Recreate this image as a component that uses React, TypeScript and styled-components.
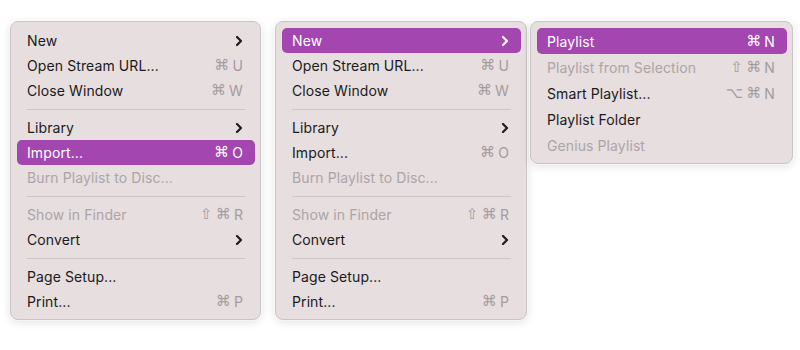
import styled, { createGlobalStyle } from 'styled-components';

const GlobalStyle = createGlobalStyle`
  html, body {
    margin: 0;
    padding: 0;
    background: #ffffff;
  }
  body {
    font-family: Inter, "Liberation Sans", "DejaVu Sans", sans-serif;
    -webkit-font-smoothing: antialiased;
  }
`;

const Page = styled.div`
  width: 800px;
  height: 350px;
  box-sizing: border-box;
  padding: 21px 0 0 10px;
  display: flex;
  align-items: flex-start;
  gap: 14px;
`;

const Cascade = styled.div`
  display: flex;
  align-items: flex-start;
  gap: 3px;
`;

const Menu = styled.div<{ $width: number }>`
  width: ${p => p.$width}px;
  box-sizing: border-box;
  padding: 6px 5px 5px 6px;
  background: #e6dedf;
  border: 1px solid #c9c4c5;
  border-radius: 8px;
  box-shadow: 0 0 0 1px rgba(255, 255, 255, 0.55), 0 2px 10px rgba(0, 0, 0, 0.13);
  display: flex;
  flex-direction: column;
`;

const Item = styled.div<{ $active?: boolean; $disabled?: boolean; $h: number }>`
  height: ${p => p.$h}px;
  display: flex;
  align-items: center;
  justify-content: space-between;
  padding: 0 12px 0 10px;
  border-radius: 5px;
  font-size: 14px;
  letter-spacing: 0.1px;
  background: ${p => (p.$active ? '#a346b0' : 'transparent')};
  color: ${p => (p.$active ? '#ffffff' : p.$disabled ? '#aca5a7' : '#1c1a1b')};
`;

const Shortcut = styled.span<{ $active?: boolean }>`
  display: flex;
  align-items: center;
  gap: 3px;
  font-size: 14px;
  color: ${p => (p.$active ? '#ffffff' : '#a39c9e')};
`;

const Sym = styled.span`
  font-family: "DejaVu Sans", sans-serif;
  font-size: 15px;
  line-height: 1;
`;

const Separator = styled.div`
  height: 12px;
  display: flex;
  align-items: center;
  padding: 0 10px;

  &::after {
    content: '';
    flex: 1;
    height: 1px;
    background: #cdc6c7;
  }
`;

const Chevron = ({ color }: { color: string }) => (
  <svg width="8" height="12" viewBox="0 0 8 12">
    <path d="M2 2 L6 6 L2 10" fill="none" stroke={color} strokeWidth="2.2" strokeLinecap="round" strokeLinejoin="round" />
  </svg>
);

type Row =
  | { sep: true }
  | { label: string; keys?: string[]; letter?: string; sub?: boolean; active?: boolean; disabled?: boolean; sep?: false };

const fileMenu = (active: string): Row[] => [
  { label: 'New', sub: true, active: active === 'New' },
  { label: 'Open Stream URL...', keys: ['⌘'], letter: 'U' },
  { label: 'Close Window', keys: ['⌘'], letter: 'W' },
  { sep: true },
  { label: 'Library', sub: true },
  { label: 'Import...', keys: ['⌘'], letter: 'O', active: active === 'Import' },
  { label: 'Burn Playlist to Disc...', disabled: true },
  { sep: true },
  { label: 'Show in Finder', keys: ['⇧', '⌘'], letter: 'R', disabled: true },
  { label: 'Convert', sub: true },
  { sep: true },
  { label: 'Page Setup...' },
  { label: 'Print...', keys: ['⌘'], letter: 'P' },
];

const newMenu: Row[] = [
  { label: 'Playlist', keys: ['⌘'], letter: 'N', active: true },
  { label: 'Playlist from Selection', keys: ['⇧', '⌘'], letter: 'N', disabled: true },
  { label: 'Smart Playlist...', keys: ['⌥', '⌘'], letter: 'N' },
  { label: 'Playlist Folder' },
  { label: 'Genius Playlist', disabled: true },
];

const MenuPanel = ({ rows, width, rowH }: { rows: Row[]; width: number; rowH: number }) => (
  <Menu $width={width}>
    {rows.map((r, i) =>
      r.sep ? (
        <Separator key={i} />
      ) : (
        <Item key={i} $h={rowH} $active={r.active} $disabled={r.disabled}>
          <span>{r.label}</span>
          {r.sub && <Chevron color={r.active ? '#ffffff' : '#1c1a1b'} />}
          {r.keys && (
            <Shortcut $active={r.active}>
              {r.keys.map((k, j) => (
                <Sym key={j}>{k}</Sym>
              ))}
              <span>{r.letter}</span>
            </Shortcut>
          )}
        </Item>
      )
    )}
  </Menu>
);

export default function App() {
  return (
    <>
      <GlobalStyle />
      <Page>
        <MenuPanel rows={fileMenu('Import')} width={251} rowH={25} />
        <Cascade>
          <MenuPanel rows={fileMenu('New')} width={252} rowH={25} />
          <MenuPanel rows={newMenu} width={263} rowH={26} />
        </Cascade>
      </Page>
    </>
  );
}
